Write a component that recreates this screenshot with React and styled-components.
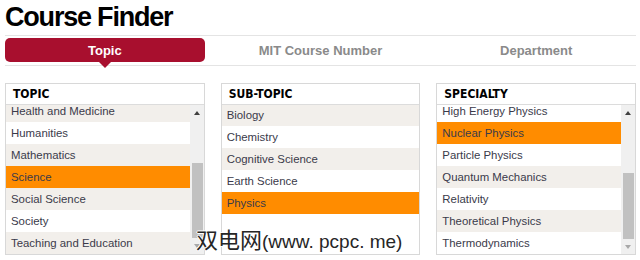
import React from 'react'
import styled, { createGlobalStyle } from 'styled-components'

const GlobalStyle = createGlobalStyle`
  html, body {
    margin: 0;
    padding: 0;
    background: #fff;
    font-family: "Liberation Sans", Arial, sans-serif;
  }
`

const tabs = ['Topic', 'MIT Course Number', 'Department']

const panels = [
  {
    title: 'TOPIC',
    offset: 5,
    firstShaded: true,
    selected: 'Science',
    scroll: { top: 42, size: 75 },
    items: ['Health and Medicine', 'Humanities', 'Mathematics', 'Science', 'Social Science', 'Society', 'Teaching and Education'],
  },
  {
    title: 'SUB-TOPIC',
    offset: 1,
    firstShaded: true,
    selected: 'Physics',
    scroll: null,
    items: ['Biology', 'Chemistry', 'Cognitive Science', 'Earth Science', 'Physics'],
  },
  {
    title: 'SPECIALTY',
    offset: 5,
    firstShaded: false,
    selected: 'Nuclear Physics',
    scroll: { top: 52, size: 66 },
    items: ['High Energy Physics', 'Nuclear Physics', 'Particle Physics', 'Quantum Mechanics', 'Relativity', 'Theoretical Physics', 'Thermodynamics'],
  },
]

function App() {
  return (
    <>
      <GlobalStyle />
      <Page>
        <Title>Course Finder</Title>
        <TabBar>
          {tabs.map((t, i) => (
            <Tab key={t} $active={i === 0}>{t}</Tab>
          ))}
        </TabBar>
        <Panels>
          {panels.map((p) => (
            <Panel key={p.title}>
              <PanelHeader>{p.title}</PanelHeader>
              <ListBody>
                <Items>
                  <ItemsInner $offset={p.offset}>
                    {p.items.map((item, i) => (
                      <Row
                        key={item}
                        $selected={item === p.selected}
                        $shaded={(i % 2 === 0) === p.firstShaded}
                      >
                        {item}
                      </Row>
                    ))}
                  </ItemsInner>
                </Items>
                {p.scroll && (
                  <ScrollBar>
                    <ArrowButton><Arrow $up /></ArrowButton>
                    <Track>
                      <Thumb style={{ marginTop: p.scroll.top, height: p.scroll.size }} />
                    </Track>
                    <ArrowButton><Arrow /></ArrowButton>
                  </ScrollBar>
                )}
              </ListBody>
            </Panel>
          ))}
        </Panels>
        <Watermark>
          <Han>双电网</Han>(www. pcpc. me)
        </Watermark>
      </Page>
    </>
  )
}

const Page = styled.div`
  position: relative;
  width: 631px;
  height: 260px;
  padding: 0 4px 0 5px;
  overflow: hidden;
`

const Title = styled.h1`
  margin: 2px 0 3px;
  font-size: 27px;
  line-height: 30px;
  font-weight: 700;
  letter-spacing: -1.2px;
  color: #000;
`

const TabBar = styled.div`
  display: grid;
  grid-template-columns: repeat(3, 1fr);
  column-gap: 16px;
  padding: 2px 0 3px;
  border-top: 1px solid #e4e4e4;
  border-bottom: 1px solid #e4e4e4;
`

const Tab = styled.div`
  position: relative;
  height: 24px;
  display: flex;
  align-items: center;
  justify-content: center;
  font-size: 13px;
  font-weight: 700;
  border-radius: 5px;
  color: ${(p) => (p.$active ? '#fff' : '#8a8a8a')};
  background: ${(p) => (p.$active ? '#a80f2e' : 'transparent')};

  ${(p) =>
    p.$active &&
    `
    &::after {
      content: '';
      position: absolute;
      left: 50%;
      bottom: -6px;
      margin-left: -6px;
      border-left: 6px solid transparent;
      border-right: 6px solid transparent;
      border-top: 6px solid #a80f2e;
    }
  `}
`

const Panels = styled.div`
  display: grid;
  grid-template-columns: repeat(3, 1fr);
  column-gap: 16px;
  margin-top: 17px;
`

const Panel = styled.div`
  box-sizing: border-box;
  height: 172px;
  border: 1px solid #d8d8d8;
  display: flex;
  flex-direction: column;
  background: #fff;
`

const PanelHeader = styled.div`
  height: 20px;
  flex: none;
  display: flex;
  align-items: center;
  padding-left: 7px;
  border-bottom: 1px solid #dcdcdc;
  font-family: "DejaVu Sans Condensed", "DejaVu Sans", sans-serif;
  font-stretch: condensed;
  font-size: 12px;
  font-weight: 700;
  color: #000;
`

const ListBody = styled.div`
  flex: 1;
  display: flex;
  min-height: 0;
`

const Items = styled.div`
  flex: 1;
  overflow: hidden;
`

const ItemsInner = styled.div`
  margin-top: -${(p) => p.$offset}px;
`

const Row = styled.div`
  height: 22px;
  line-height: 22px;
  padding-left: 5px;
  font-size: 11.4px;
  color: #3a3a4a;
  white-space: nowrap;
  background: ${(p) => (p.$selected ? '#ff8c00' : p.$shaded ? '#f2efeb' : '#fff')};
`

const ScrollBar = styled.div`
  width: 14px;
  flex: none;
  display: flex;
  flex-direction: column;
  background: #f0f0f0;
`

const ArrowButton = styled.div`
  height: 16px;
  flex: none;
  display: flex;
  align-items: center;
  justify-content: center;
`

const Arrow = styled.div`
  width: 0;
  height: 0;
  border-left: 3px solid transparent;
  border-right: 3px solid transparent;
  ${(p) => (p.$up ? 'border-bottom: 4px solid #404040;' : 'border-top: 4px solid #a8a8a8;')}
`

const Track = styled.div`
  flex: 1;
  display: flex;
  flex-direction: column;
`

const Thumb = styled.div`
  margin-left: 2px;
  margin-right: 1px;
  background: #c1c1c1;
`

const Watermark = styled.div`
  position: absolute;
  left: 196px;
  top: 224px;
  font-family: "Liberation Sans", sans-serif;
  font-size: 19px;
  line-height: 28px;
  color: #262626;
  white-space: nowrap;
  text-shadow: -1px 0 #fff, 1px 0 #fff, 0 -1px #fff, 0 1px #fff;
`

const Han = styled.span`
  font-family: "Noto Sans CJK SC", sans-serif;
  font-size: 22px;
`

export default App
